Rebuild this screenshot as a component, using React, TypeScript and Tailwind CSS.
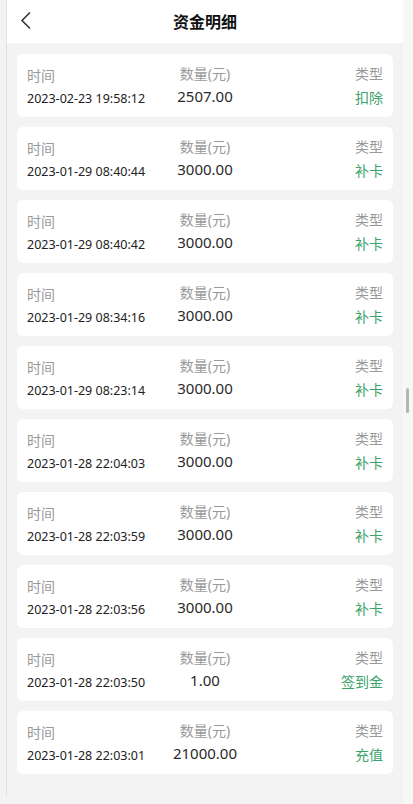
const rows = [
  { time: '2023-02-23 19:58:12', amount: '2507.00', type: '扣除' },
  { time: '2023-01-29 08:40:44', amount: '3000.00', type: '补卡' },
  { time: '2023-01-29 08:40:42', amount: '3000.00', type: '补卡' },
  { time: '2023-01-29 08:34:16', amount: '3000.00', type: '补卡' },
  { time: '2023-01-29 08:23:14', amount: '3000.00', type: '补卡' },
  { time: '2023-01-28 22:04:03', amount: '3000.00', type: '补卡' },
  { time: '2023-01-28 22:03:59', amount: '3000.00', type: '补卡' },
  { time: '2023-01-28 22:03:56', amount: '3000.00', type: '补卡' },
  { time: '2023-01-28 22:03:50', amount: '1.00', type: '签到金' },
  { time: '2023-01-28 22:03:01', amount: '21000.00', type: '充值' },
];

function RecordCard({ time, amount, type }: { time: string; amount: string; type: string }) {
  return (
    <div className="flex h-[63px] items-start justify-between rounded-[6px] bg-white px-[10px] pt-[10px]">
      <div className="flex w-[130px] flex-col pt-[2px]">
        <span className="text-[14px] leading-[20px] text-[#999999]">时间</span>
        <span className="mt-[3px] text-[12.5px] leading-[20px] text-[#222222]">{time}</span>
      </div>
      <div className="flex flex-col items-center">
        <span className="text-[14px] leading-[20px] text-[#999999]">数量(元)</span>
        <span className="mt-[2px] text-[15px] leading-[20px] text-[#2a2a2a]">{amount}</span>
      </div>
      <div className="flex w-[130px] flex-col items-end">
        <span className="text-[14px] leading-[20px] text-[#999999]">类型</span>
        <span className="mt-[4px] text-[14px] leading-[20px] text-[#3ca36c]">{type}</span>
      </div>
    </div>
  );
}

export default function App() {
  return (
    <div
      className="flex h-[804px] w-[413px] overflow-hidden bg-[#f3f3f3]"
      style={{ fontFamily: '"Noto Sans", "Noto Sans CJK SC", sans-serif' }}
    >
      {/* left gutter */}
      <div className="w-[6px] shrink-0 bg-[#f3f3f3]" />
      <main className="flex h-[797px] w-[397px] shrink-0 flex-col border-l border-[#e2e2e2] bg-[#f3f3f3]">
        <header className="relative flex h-[43px] shrink-0 items-center justify-center bg-white">
          <svg
            className="absolute left-[13px] top-[11px]"
            width="12"
            height="19"
            viewBox="0 0 12 19"
            fill="none"
          >
            <path d="M10 1.5 L2 9.5 L10 17.5" stroke="#333333" strokeWidth="1.6" />
          </svg>
          <h1 className="text-[16px] font-bold leading-none text-[#111111]">资金明细</h1>
        </header>
        <div className="flex flex-col gap-[10px] px-[10px] pt-[11px]">
          {rows.map((r, i) => (
            <RecordCard key={i} {...r} />
          ))}
        </div>
      </main>
      {/* scrollbar */}
      <div className="relative w-[10px] shrink-0 bg-[#f7f7f7]">
        <div className="absolute left-[3px] top-[388px] h-[25px] w-[3px] rounded-full bg-[#b5b5b5]" />
      </div>
    </div>
  );
}
